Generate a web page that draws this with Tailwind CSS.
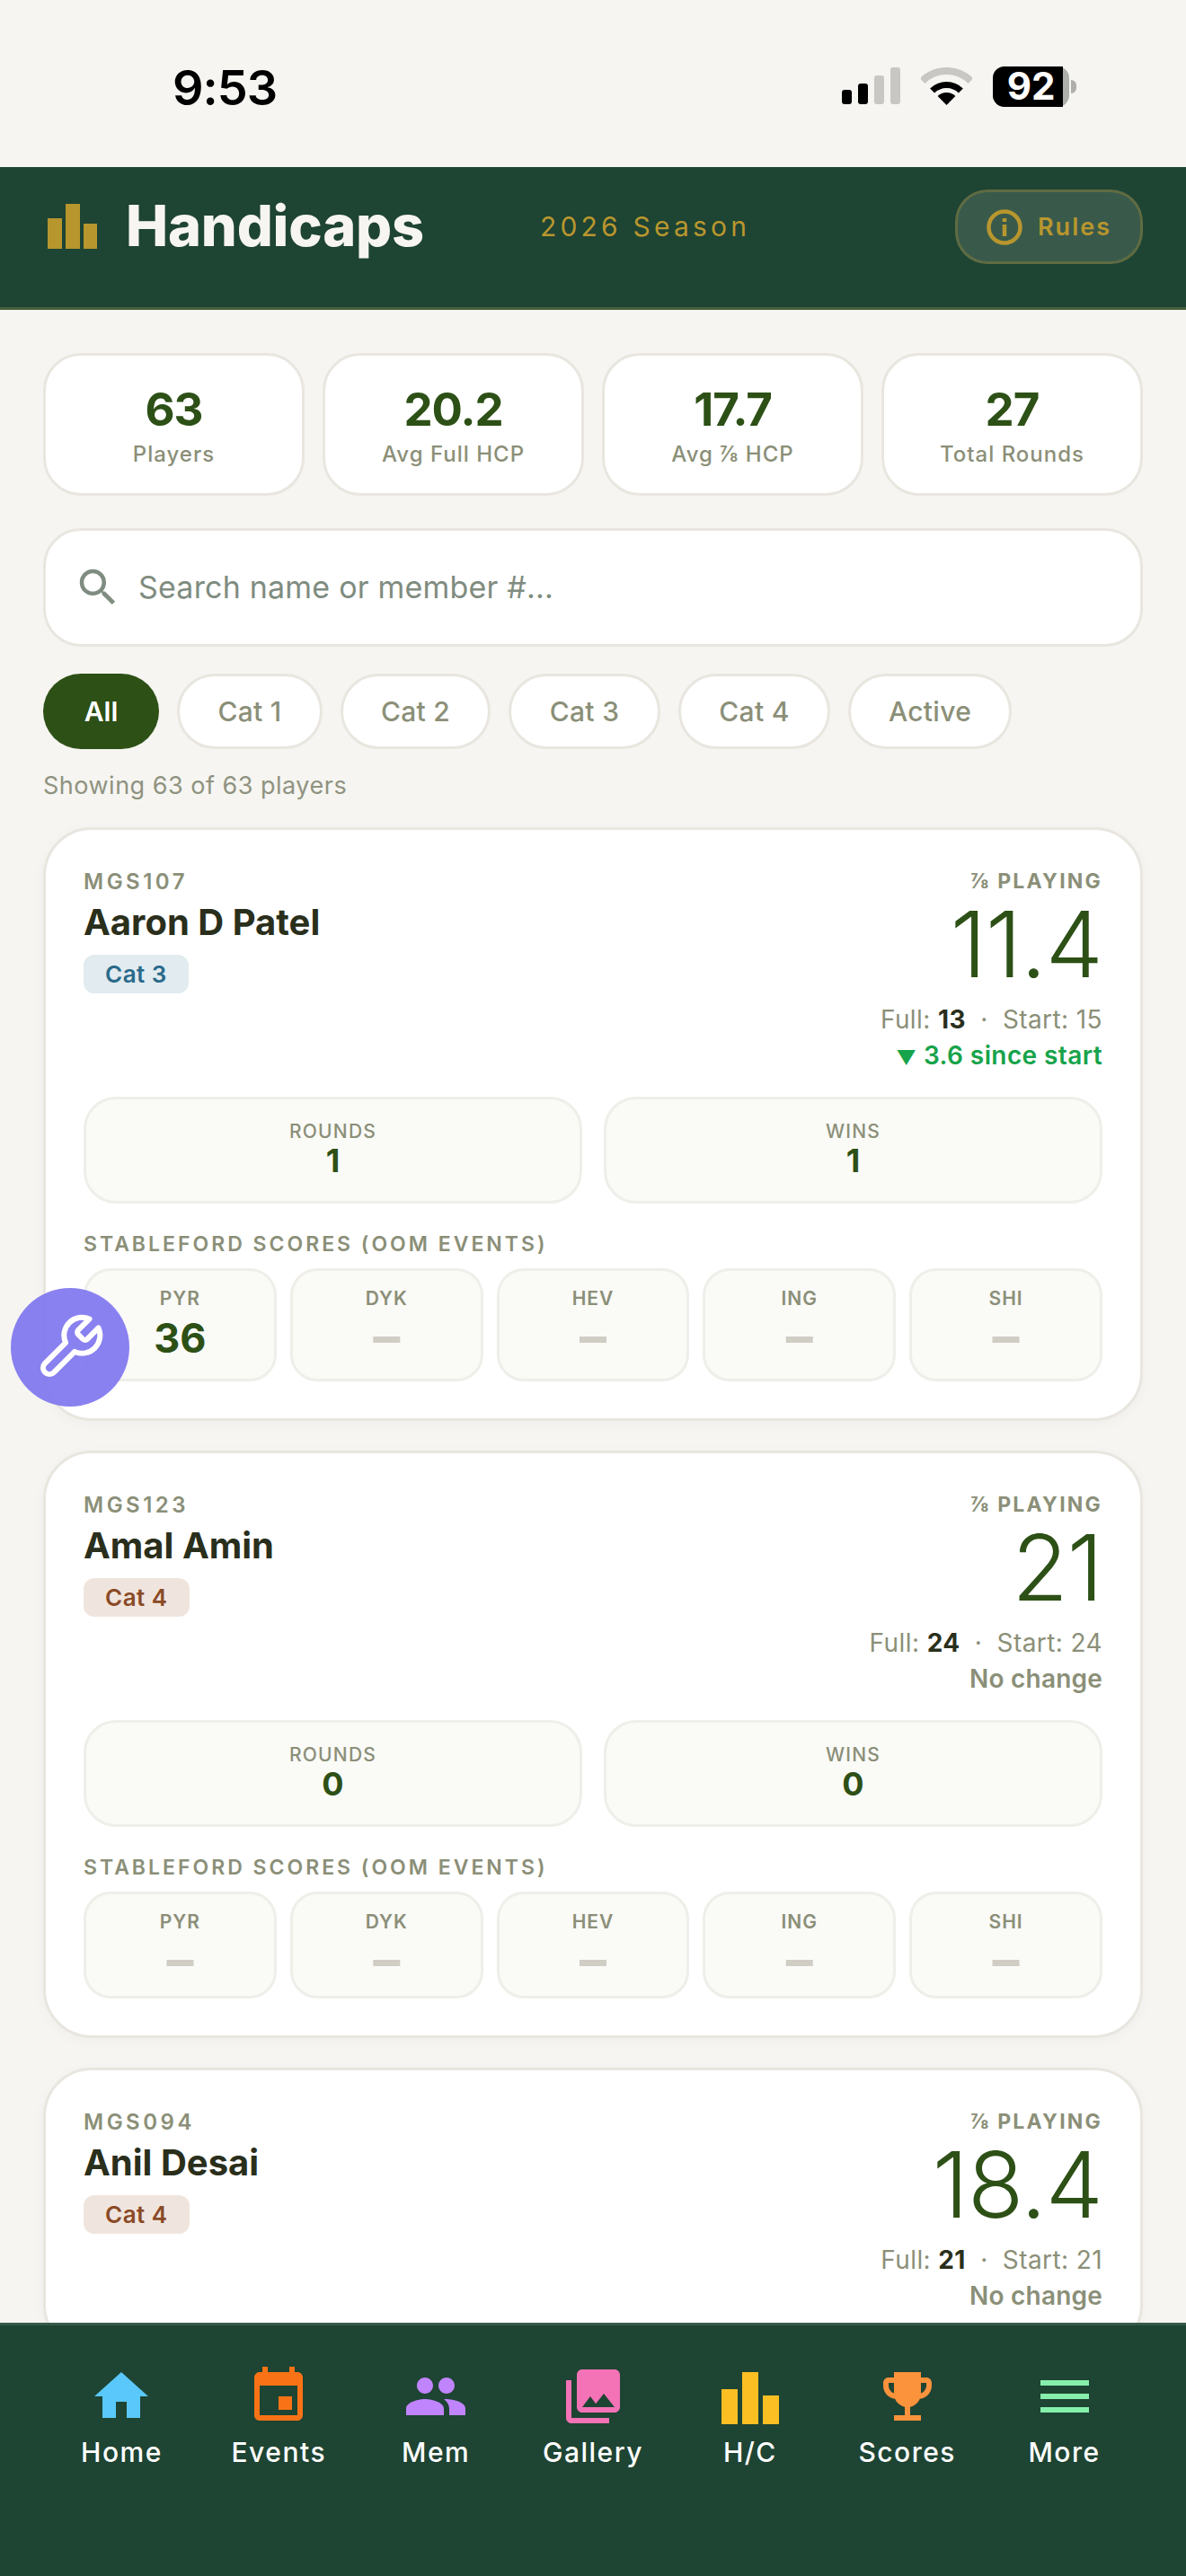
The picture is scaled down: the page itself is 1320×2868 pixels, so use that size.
<!DOCTYPE html>
<html lang="en">
<head>
    <meta charset="UTF-8">
    <meta name="viewport" content="width=device-width, initial-scale=1.0">
    <title>Handicaps</title>
    <script src="https://cdn.jsdelivr.net/npm/@tailwindcss/browser@4"></script>
</head>
<body class="font-['Inter',sans-serif] bg-[#f6f5f1]">

<div class="relative w-[1320px] h-[2868px] overflow-hidden flex flex-col bg-[#f6f5f1]">

    <!-- Status bar -->
    <div class="h-[186px] shrink-0 flex items-center justify-between pl-[192px] pr-[122px] pt-[6px]">
        <span class="mt-[4px] text-[54px] leading-none font-semibold text-black tracking-[-1px]">9:53</span>
        <div class="flex items-center gap-[23px]">
            <svg width="65" height="42" viewBox="0 0 65 42">
                <rect x="0" y="25" width="11" height="16" rx="3" fill="#000"/>
                <rect x="18" y="18" width="11" height="23" rx="3" fill="#000"/>
                <rect x="36" y="9" width="11" height="32" rx="3" fill="#c8c7c3"/>
                <rect x="54" y="0" width="11" height="41" rx="3" fill="#c8c7c3"/>
            </svg>
            <svg width="57" height="42" viewBox="0 0 57 42">
                <path d="M1.6 15.1A38 38 0 0 1 55.4 15.1" fill="none" stroke="#c8c7c3" stroke-width="8"/>
                <path d="M12.6 26.1A22.5 22.5 0 0 1 44.4 26.1" fill="none" stroke="#000" stroke-width="7"/>
                <path d="M28.5 42L18.6 32.1A14 14 0 0 1 38.4 32.1Z" fill="#000"/>
            </svg>
            <div class="flex items-center gap-[2px]">
                <div class="w-[85px] h-[45px] rounded-[13px] bg-[#aeaeaa]">
                    <div class="w-[78px] h-[45px] rounded-l-[13px] bg-black flex items-center justify-center pl-[7px] text-white text-[42px] leading-none font-bold">92</div>
                </div>
                <div class="w-[6px] h-[15px] rounded-r-[6px] bg-[#aeaeaa]"></div>
            </div>
        </div>
    </div>

    <!-- Header -->
    <header class="h-[159px] shrink-0 bg-[#1e4433] border-b-[3px] border-[#46603a] flex items-center pl-[53px] pr-[48px]">
        <svg class="-mt-[24px]" width="55" height="50" viewBox="0 0 55 50">
            <rect x="0" y="16" width="16" height="34" fill="#b8962e"/>
            <rect x="20" y="0" width="16" height="50" fill="#b8962e"/>
            <rect x="40" y="22" width="15" height="28" fill="#b8962e"/>
        </svg>
        <h1 class="ml-[32px] -mt-[25px] text-[63px] leading-none font-extrabold tracking-[-0.2px] text-[#f6f5f1]">Handicaps</h1>
        <span class="ml-[129px] -mt-[25px] text-[30px] leading-none text-[#b8962e] tracking-[4.2px]">2026 Season</span>
        <div class="ml-auto -mt-[23px] w-[209px] h-[83px] rounded-[36px] bg-white/12 border-[3px] border-[#b8962e]/30 flex items-center justify-center gap-[17px]">
            <svg width="40" height="40" viewBox="0 0 40 40" fill="none" stroke="#b8962e" stroke-width="4.5">
                <circle cx="20" cy="20" r="17.5"/>
                <path d="M20 17v13M20 10v4"/>
            </svg>
            <span class="text-[27px] leading-none font-semibold tracking-[2px] text-[#b8962e]">Rules</span>
        </div>
    </header>

    <main class="flex-1 min-h-0 overflow-hidden px-[48px] pt-[48px]">

        <!-- Summary -->
        <div class="grid grid-cols-4 gap-[20px]">
            <div class="h-[159px] bg-white rounded-[42px] border-[3px] border-[#e8e6df] flex flex-col items-center pt-[30px]">
                <div class="text-[51px] leading-[60px] font-bold tracking-[-1px] text-[#2d5016]">63</div>
                <div class="mt-[5px] text-[24px] leading-[30px] font-medium tracking-[1px] text-[#8b8f78]">Players</div>
            </div>
            <div class="h-[159px] bg-white rounded-[42px] border-[3px] border-[#e8e6df] flex flex-col items-center pt-[30px]">
                <div class="text-[51px] leading-[60px] font-bold tracking-[-1px] text-[#2d5016]">20.2</div>
                <div class="mt-[5px] text-[24px] leading-[30px] font-medium tracking-[1px] text-[#8b8f78]">Avg Full HCP</div>
            </div>
            <div class="h-[159px] bg-white rounded-[42px] border-[3px] border-[#e8e6df] flex flex-col items-center pt-[30px]">
                <div class="text-[51px] leading-[60px] font-bold tracking-[-1px] text-[#2d5016]">17.7</div>
                <div class="mt-[5px] text-[24px] leading-[30px] font-medium tracking-[1px] text-[#8b8f78]">Avg ⅞ HCP</div>
            </div>
            <div class="h-[159px] bg-white rounded-[42px] border-[3px] border-[#e8e6df] flex flex-col items-center pt-[30px]">
                <div class="text-[51px] leading-[60px] font-bold tracking-[-1px] text-[#2d5016]">27</div>
                <div class="mt-[5px] text-[24px] leading-[30px] font-medium tracking-[1px] text-[#8b8f78]">Total Rounds</div>
            </div>
        </div>

        <!-- Search -->
        <div class="mt-[36px] h-[132px] bg-white rounded-[42px] border-[3px] border-[#e8e6df] flex items-center pl-[31px]">
            <svg width="54" height="54" viewBox="0 0 24 24" fill="#7f8c80"><path d="M15.5 14h-.79l-.28-.27A6.471 6.471 0 0 0 16 9.5 6.5 6.5 0 1 0 9.5 16c1.61 0 3.09-.59 4.23-1.57l.27.28v.79l5 4.99L20.49 19l-4.99-5zm-6 0C7.01 14 5 11.99 5 9.5S7.01 5 9.5 5 14 7.01 14 9.5 11.99 14 9.5 14z"/></svg>
            <span class="ml-[18px] text-[34px] leading-none text-[#7f8c80] tracking-[0.2px]">Search name or member #...</span>
        </div>

        <!-- Filters -->
        <div class="mt-[30px] flex gap-[20px]">
            <div class="h-[84px] w-[129px] rounded-full bg-[#2d5016] flex items-center justify-center text-[30px] font-semibold text-white">All</div>
            <div class="h-[84px] w-[162px] rounded-full bg-white border-[3px] border-[#e8e6df] flex items-center justify-center text-[30px] font-medium tracking-[0.3px] text-[#8b8f78]">Cat 1</div>
            <div class="h-[84px] w-[167px] rounded-full bg-white border-[3px] border-[#e8e6df] flex items-center justify-center text-[30px] font-medium tracking-[0.3px] text-[#8b8f78]">Cat 2</div>
            <div class="h-[84px] w-[169px] rounded-full bg-white border-[3px] border-[#e8e6df] flex items-center justify-center text-[30px] font-medium tracking-[0.3px] text-[#8b8f78]">Cat 3</div>
            <div class="h-[84px] w-[169px] rounded-full bg-white border-[3px] border-[#e8e6df] flex items-center justify-center text-[30px] font-medium tracking-[0.3px] text-[#8b8f78]">Cat 4</div>
            <div class="h-[84px] w-[182px] rounded-full bg-white border-[3px] border-[#e8e6df] flex items-center justify-center text-[30px] font-medium tracking-[0.3px] text-[#8b8f78]">Active</div>
        </div>

        <p class="mt-[24px] text-[27px] leading-[34px] tracking-[0.5px] text-[#8f9280]">Showing 63 of 63 players</p>

        <!-- Player cards -->
        <div class="mt-[29px] flex flex-col gap-[33px]">

            <article class="bg-white rounded-[54px] border-[3px] border-[#e8e6df] px-[42px] pt-[43px] pb-[41px] shadow-[0_3px_15px_rgba(0,0,0,0.03)]">
                <div class="flex justify-between">
                    <div>
                        <div class="text-[24px] leading-[30px] font-semibold tracking-[3.5px] text-[#8b8f78]">MGS107</div>
                        <div class="mt-[5px] text-[40px] leading-[50px] font-bold text-[#2a2f1c]">Aaron D Patel</div>
                        <div class="mt-[11px] inline-flex h-[43px] items-center rounded-[12px] px-[24px] bg-[#e1ebf0] text-[26px] font-semibold tracking-[0.5px] text-[#2a6a8a]">Cat 3</div>
                    </div>
                    <div class="text-right">
                        <div class="text-[23px] leading-[29px] font-bold tracking-[2.2px] text-[#8b8f78]">⅞ PLAYING</div>
                        <div class="text-[102px] leading-[110px] font-light tracking-[-1px] text-[#2d5016]">11.4</div>
                        <div class="mt-[9px] text-[28px] leading-[40px] tracking-[0.4px] text-[#8b8f78]">Full: <b class="font-bold text-[#2a2f1c]">13</b> <span class="mx-[8px]">·</span> Start: 15</div>
                        <div class="h-[40px] text-[28px] leading-[40px] font-semibold tracking-[0.4px] text-[#16a34a]"><span class="text-[22px] leading-none">▼</span> 3.6 since start</div>
                    </div>
                </div>
                <div class="mt-[26px] grid grid-cols-2 gap-[24px]">
                    <div class="h-[119px] bg-[#fafaf7] rounded-[36px] border-[3px] border-[#efeee9] flex flex-col items-center pt-[23px]">
                        <div class="text-[21px] leading-[26px] font-medium tracking-[1.2px] text-[#8b8f78]">ROUNDS</div>
                        <div class="text-[36px] leading-[38px] font-bold text-[#2d5016]">1</div>
                    </div>
                    <div class="h-[119px] bg-[#fafaf7] rounded-[36px] border-[3px] border-[#efeee9] flex flex-col items-center pt-[23px]">
                        <div class="text-[21px] leading-[26px] font-medium tracking-[1.2px] text-[#8b8f78]">WINS</div>
                        <div class="text-[36px] leading-[38px] font-bold text-[#2d5016]">1</div>
                    </div>
                </div>
                <div class="mt-[30px] text-[23px] leading-[30px] font-semibold tracking-[3px] text-[#8b8f78]">STABLEFORD SCORES (OOM EVENTS)</div>
                <div class="mt-[12px] grid grid-cols-5 gap-[15px]">
                    <div class="bg-[#fafaf7] rounded-[30px] border-[3px] border-[#efeee9] flex flex-col items-center pt-[19px] pb-[16px]">
                        <div class="text-[21px] leading-[24px] font-semibold tracking-[1px] text-[#8b8f78]">PYR</div>
                        <div class="mt-[3px] text-[45px] leading-[58px] font-bold text-[#2d5016]">36</div>
                    </div>
                    <div class="bg-[#fafaf7] rounded-[30px] border-[3px] border-[#efeee9] flex flex-col items-center pt-[19px] pb-[16px]">
                        <div class="text-[21px] leading-[24px] font-semibold tracking-[1px] text-[#8b8f78]">DYK</div>
                        <div class="mt-[3px] h-[58px] text-[60px] leading-[52px] font-bold text-[#d0cdc4]">–</div>
                    </div>
                    <div class="bg-[#fafaf7] rounded-[30px] border-[3px] border-[#efeee9] flex flex-col items-center pt-[19px] pb-[16px]">
                        <div class="text-[21px] leading-[24px] font-semibold tracking-[1px] text-[#8b8f78]">HEV</div>
                        <div class="mt-[3px] h-[58px] text-[60px] leading-[52px] font-bold text-[#d0cdc4]">–</div>
                    </div>
                    <div class="bg-[#fafaf7] rounded-[30px] border-[3px] border-[#efeee9] flex flex-col items-center pt-[19px] pb-[16px]">
                        <div class="text-[21px] leading-[24px] font-semibold tracking-[1px] text-[#8b8f78]">ING</div>
                        <div class="mt-[3px] h-[58px] text-[60px] leading-[52px] font-bold text-[#d0cdc4]">–</div>
                    </div>
                    <div class="bg-[#fafaf7] rounded-[30px] border-[3px] border-[#efeee9] flex flex-col items-center pt-[19px] pb-[16px]">
                        <div class="text-[21px] leading-[24px] font-semibold tracking-[1px] text-[#8b8f78]">SHI</div>
                        <div class="mt-[3px] h-[58px] text-[60px] leading-[52px] font-bold text-[#d0cdc4]">–</div>
                    </div>
                </div>
            </article>

            <article class="bg-white rounded-[54px] border-[3px] border-[#e8e6df] px-[42px] pt-[43px] pb-[41px] shadow-[0_3px_15px_rgba(0,0,0,0.03)]">
                <div class="flex justify-between">
                    <div>
                        <div class="text-[24px] leading-[30px] font-semibold tracking-[3.5px] text-[#8b8f78]">MGS123</div>
                        <div class="mt-[5px] text-[40px] leading-[50px] font-bold text-[#2a2f1c]">Amal Amin</div>
                        <div class="mt-[11px] inline-flex h-[43px] items-center rounded-[12px] px-[24px] bg-[#f0e5de] text-[26px] font-semibold tracking-[0.5px] text-[#8a4a26]">Cat 4</div>
                    </div>
                    <div class="text-right">
                        <div class="text-[23px] leading-[29px] font-bold tracking-[2.2px] text-[#8b8f78]">⅞ PLAYING</div>
                        <div class="text-[102px] leading-[110px] font-light tracking-[-1px] text-[#2d5016]">21</div>
                        <div class="mt-[9px] text-[28px] leading-[40px] tracking-[0.4px] text-[#8b8f78]">Full: <b class="font-bold text-[#2a2f1c]">24</b> <span class="mx-[8px]">·</span> Start: 24</div>
                        <div class="text-[28px] leading-[40px] font-semibold tracking-[0.2px] text-[#8b8f78]">No change</div>
                    </div>
                </div>
                <div class="mt-[26px] grid grid-cols-2 gap-[24px]">
                    <div class="h-[119px] bg-[#fafaf7] rounded-[36px] border-[3px] border-[#efeee9] flex flex-col items-center pt-[23px]">
                        <div class="text-[21px] leading-[26px] font-medium tracking-[1.2px] text-[#8b8f78]">ROUNDS</div>
                        <div class="text-[36px] leading-[38px] font-bold text-[#2d5016]">0</div>
                    </div>
                    <div class="h-[119px] bg-[#fafaf7] rounded-[36px] border-[3px] border-[#efeee9] flex flex-col items-center pt-[23px]">
                        <div class="text-[21px] leading-[26px] font-medium tracking-[1.2px] text-[#8b8f78]">WINS</div>
                        <div class="text-[36px] leading-[38px] font-bold text-[#2d5016]">0</div>
                    </div>
                </div>
                <div class="mt-[30px] text-[23px] leading-[30px] font-semibold tracking-[3px] text-[#8b8f78]">STABLEFORD SCORES (OOM EVENTS)</div>
                <div class="mt-[12px] grid grid-cols-5 gap-[15px]">
                    <div class="bg-[#fafaf7] rounded-[30px] border-[3px] border-[#efeee9] flex flex-col items-center pt-[19px] pb-[9px]">
                        <div class="text-[21px] leading-[24px] font-semibold tracking-[1px] text-[#8b8f78]">PYR</div>
                        <div class="mt-[3px] h-[58px] text-[60px] leading-[52px] font-bold text-[#d0cdc4]">–</div>
                    </div>
                    <div class="bg-[#fafaf7] rounded-[30px] border-[3px] border-[#efeee9] flex flex-col items-center pt-[19px] pb-[9px]">
                        <div class="text-[21px] leading-[24px] font-semibold tracking-[1px] text-[#8b8f78]">DYK</div>
                        <div class="mt-[3px] h-[58px] text-[60px] leading-[52px] font-bold text-[#d0cdc4]">–</div>
                    </div>
                    <div class="bg-[#fafaf7] rounded-[30px] border-[3px] border-[#efeee9] flex flex-col items-center pt-[19px] pb-[9px]">
                        <div class="text-[21px] leading-[24px] font-semibold tracking-[1px] text-[#8b8f78]">HEV</div>
                        <div class="mt-[3px] h-[58px] text-[60px] leading-[52px] font-bold text-[#d0cdc4]">–</div>
                    </div>
                    <div class="bg-[#fafaf7] rounded-[30px] border-[3px] border-[#efeee9] flex flex-col items-center pt-[19px] pb-[9px]">
                        <div class="text-[21px] leading-[24px] font-semibold tracking-[1px] text-[#8b8f78]">ING</div>
                        <div class="mt-[3px] h-[58px] text-[60px] leading-[52px] font-bold text-[#d0cdc4]">–</div>
                    </div>
                    <div class="bg-[#fafaf7] rounded-[30px] border-[3px] border-[#efeee9] flex flex-col items-center pt-[19px] pb-[9px]">
                        <div class="text-[21px] leading-[24px] font-semibold tracking-[1px] text-[#8b8f78]">SHI</div>
                        <div class="mt-[3px] h-[58px] text-[60px] leading-[52px] font-bold text-[#d0cdc4]">–</div>
                    </div>
                </div>
            </article>

            <article class="bg-white rounded-[54px] border-[3px] border-[#e8e6df] px-[42px] pt-[43px] pb-[41px] shadow-[0_3px_15px_rgba(0,0,0,0.03)]">
                <div class="flex justify-between">
                    <div>
                        <div class="text-[24px] leading-[30px] font-semibold tracking-[3.5px] text-[#8b8f78]">MGS094</div>
                        <div class="mt-[5px] text-[40px] leading-[50px] font-bold text-[#2a2f1c]">Anil Desai</div>
                        <div class="mt-[11px] inline-flex h-[43px] items-center rounded-[12px] px-[24px] bg-[#f0e5de] text-[26px] font-semibold tracking-[0.5px] text-[#8a4a26]">Cat 4</div>
                    </div>
                    <div class="text-right">
                        <div class="text-[23px] leading-[29px] font-bold tracking-[2.2px] text-[#8b8f78]">⅞ PLAYING</div>
                        <div class="text-[102px] leading-[110px] font-light tracking-[-1px] text-[#2d5016]">18.4</div>
                        <div class="mt-[9px] text-[28px] leading-[40px] tracking-[0.4px] text-[#8b8f78]">Full: <b class="font-bold text-[#2a2f1c]">21</b> <span class="mx-[8px]">·</span> Start: 21</div>
                        <div class="text-[28px] leading-[40px] font-semibold tracking-[0.2px] text-[#8b8f78]">No change</div>
                    </div>
                </div>
            </article>
        </div>
    </main>

    <!-- Bottom nav -->
    <nav class="h-[282px] shrink-0 bg-[#1e4433] border-t-[3px] border-[#38594a] px-[48px] pt-[43px] grid grid-cols-7">
        <div class="flex flex-col items-center">
            <svg width="72" height="72" viewBox="0 0 24 24" fill="#5ac8fa"><path d="M10 20v-6h4v6h5v-8h3L12 3 2 12h3v8z"/></svg>
            <span class="mt-[8px] text-[30px] leading-[36px] font-medium tracking-[1.5px] text-white">Home</span>
        </div>
        <div class="flex flex-col items-center">
            <svg width="72" height="72" viewBox="0 0 24 24" fill="#f97316"><path d="M17 12h-5v5h5v-5zM16 1v2H8V1H6v2H5c-1.11 0-1.99.9-1.99 2L3 19c0 1.1.89 2 2 2h14c1.1 0 2-.9 2-2V5c0-1.1-.9-2-2-2h-1V1h-2zm3 18H5V8h14v11z"/></svg>
            <span class="mt-[8px] text-[30px] leading-[36px] font-medium tracking-[1.5px] text-white">Events</span>
        </div>
        <div class="flex flex-col items-center">
            <svg width="72" height="72" viewBox="0 0 24 24" fill="#c084fc"><path d="M16 11c1.66 0 2.99-1.34 2.99-3S17.66 5 16 5c-1.66 0-3 1.34-3 3s1.34 3 3 3zm-8 0c1.66 0 2.99-1.34 2.99-3S9.66 5 8 5C6.34 5 5 6.34 5 8s1.34 3 3 3zm0 2c-2.33 0-7 1.17-7 3.5V19h14v-2.5c0-2.33-4.67-3.5-7-3.5zm8 0c-.29 0-.62.02-.97.05 1.16.84 1.97 1.97 1.97 3.45V19h6v-2.5c0-2.33-4.67-3.5-7-3.5z"/></svg>
            <span class="mt-[8px] text-[30px] leading-[36px] font-medium tracking-[1.5px] text-white">Mem</span>
        </div>
        <div class="flex flex-col items-center">
            <svg width="72" height="72" viewBox="0 0 24 24" fill="#f472b6"><path d="M22 16V4c0-1.1-.9-2-2-2H8c-1.1 0-2 .9-2 2v12c0 1.1.9 2 2 2h12c1.1 0 2-.9 2-2zm-11-4l2.03 2.71L16 11l4 5H8l3-4zM2 6v14c0 1.1.9 2 2 2h14v-2H4V6H2z"/></svg>
            <span class="mt-[8px] text-[30px] leading-[36px] font-medium tracking-[1.5px] text-white">Gallery</span>
        </div>
        <div class="flex flex-col items-center">
            <svg width="72" height="72" viewBox="0 0 72 72" fill="#fbbf24">
                <rect x="4" y="28" width="18" height="39"/>
                <rect x="27" y="9" width="18" height="58"/>
                <rect x="50" y="35" width="18" height="32"/>
            </svg>
            <span class="mt-[8px] text-[30px] leading-[36px] font-medium tracking-[1.5px] text-white">H/C</span>
        </div>
        <div class="flex flex-col items-center">
            <svg width="72" height="72" viewBox="0 0 24 24" fill="#fb923c"><path d="M19 5h-2V3H7v2H5c-1.1 0-2 .9-2 2v1c0 2.55 1.92 4.63 4.39 4.94.63 1.5 1.98 2.63 3.61 2.96V19H7v2h10v-2h-4v-3.1c1.63-.33 2.98-1.46 3.61-2.96C19.08 12.63 21 10.55 21 8V7c0-1.1-.9-2-2-2zM5 8V7h2v3.82C5.84 10.4 5 9.3 5 8zm14 0c0 1.3-.84 2.4-2 2.82V7h2v1z"/></svg>
            <span class="mt-[8px] text-[30px] leading-[36px] font-medium tracking-[1.5px] text-white">Scores</span>
        </div>
        <div class="flex flex-col items-center">
            <svg width="72" height="72" viewBox="0 0 24 24" fill="#86efac"><path d="M3 18h18v-2H3v2zm0-5h18v-2H3v2zm0-7v2h18V6H3z"/></svg>
            <span class="mt-[8px] text-[30px] leading-[36px] font-medium tracking-[1.5px] text-white">More</span>
        </div>
    </nav>

    <!-- Floating dev button -->
    <div class="absolute left-[12px] top-[1434px] w-[132px] h-[132px] rounded-full bg-[#7c73ee]/90 flex items-center justify-center">
        <svg width="80" height="80" viewBox="0 0 24 24" fill="none" stroke="#fff" stroke-width="1.8" stroke-linecap="round" stroke-linejoin="round"><path d="M14.7 6.3a1 1 0 0 0 0 1.4l1.6 1.6a1 1 0 0 0 1.4 0l3.77-3.77a6 6 0 0 1-7.94 7.94l-6.91 6.91a2.12 2.12 0 0 1-3-3l6.91-6.91a6 6 0 0 1 7.94-7.94l-3.76 3.76z"/></svg>
    </div>
</div>

</body>
</html>
